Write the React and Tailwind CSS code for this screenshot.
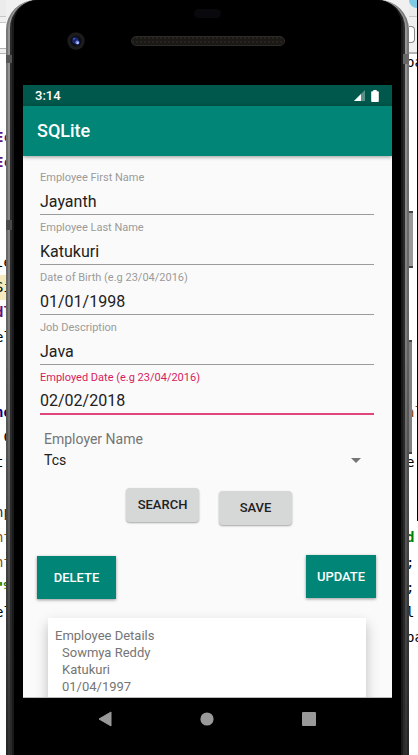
import React from "react";

const leftCode = [
  { text: " ,", top: "text-[#3a1a10]" },
  {}, {},
  { text: "Ec", top: "font-bold text-[#660e7a]" },
  { text: "Ec", top: "font-bold text-[#660e7a]" },
  {}, {}, {},
  { text: "le", top: "text-black" },
  { text: "Si", top: "bg-[#f5eabb] text-black" },
  { text: "dl", top: "font-bold text-[#660e7a]" },
  { text: "el", top: "text-black" },
  {}, {},
  { text: "ne", top: "font-bold text-[#000080]" },
  { text: " C", top: "text-black" },
  { text: "t", top: "text-black" },
  {},
  { text: "np", top: "text-[#1a2b4a]" },
  { text: "nt", top: "text-[#8a4a10]" },
  { text: "nt", top: "text-[#8a4a10]" },
  { text: "\"%", top: "font-bold text-[#008000]" },
  { text: "el", top: "text-black" },
  { text: " ,", top: "text-[#3a1a10]" },
];

const rightCode = [
  { text: "pa", top: "text-black" },
  {}, {}, {}, {}, {}, {}, {}, {}, {}, {}, {}, {}, {},
  { text: "al", top: "text-[#8a4a10]" },
  {},
  { text: "e", top: "text-black" },
  {}, {},
  { text: "d", top: "font-bold text-[#008000]" },
  { text: ";", top: "text-black" },
  { text: ";", top: "text-black" },
  { text: "l", top: "text-black" },
  { text: "pa", top: "text-black" },
];

const fields = [
  { id: "first", label: "Employee First Name", value: "Jayanth" },
  { id: "last", label: "Employee Last Name", value: "Katukuri" },
  { id: "dob", label: "Date of Birth (e.g 23/04/2016)", value: "01/01/1998" },
  { id: "job", label: "Job Description", value: "Java" },
  { id: "employed", label: "Employed Date (e.g 23/04/2016)", value: "02/02/2018", active: true },
];

function CodeLines({ lines, shift }) {
  return (
    <div className="font-['DejaVu_Sans_Mono',monospace] text-sm leading-[25px]">
      {lines.map((line, i) => (
        <div key={i} className={`h-[25px] whitespace-pre ${line.top || ""}`}>
          <span className={`block ${shift}`}>{line.text}</span>
        </div>
      ))}
    </div>
  );
}

function Field({ id, label, value, active }) {
  return (
    <div className="pt-[5px]">
      <label
        htmlFor={id}
        className={`block text-[11px] leading-4 ${active ? "text-[#d81b60]" : "text-[#9b9b9b]"}`}
      >
        {label}
      </label>
      <input
        id={id}
        type="text"
        defaultValue={value}
        className={`block h-[29px] w-full bg-transparent pt-[2px] text-base text-[#212121] outline-none ${
          active ? "border-b-2 border-[#e0457d]" : "border-b border-[#9b9b9b]"
        }`}
      />
    </div>
  );
}

function Bezel() {
  return (
    <div className="h-[85px] shrink-0">
      <div className="flex justify-center pt-[9px]">
        <div className="h-[9px] w-[27px] rounded-full bg-[#08080d]" />
      </div>
      <div className="mt-[14px] flex items-center gap-[46px] pl-11">
        <svg width="18" height="18" viewBox="0 0 18 18" aria-hidden="true">
          <circle cx="9" cy="9" r="8.7" fill="#1d1c1c" />
          <circle cx="9" cy="9" r="5.6" fill="#0b0d18" />
          <circle cx="8.4" cy="8.5" r="3.2" fill="#1b2766" />
          <circle cx="10.4" cy="10.6" r="2" fill="#6c83e0" />
          <circle cx="10.7" cy="11" r="0.9" fill="#c9d4ff" />
          <circle cx="7" cy="6.8" r="1" fill="#4055b8" />
        </svg>
        <svg width="154" height="10" viewBox="0 0 154 10" aria-hidden="true">
          <defs>
            <pattern id="mesh" width="4" height="4" patternUnits="userSpaceOnUse">
              <rect width="4" height="4" fill="#1b1916" />
              <rect x="1" y="1" width="2" height="2" fill="#26231f" />
            </pattern>
          </defs>
          <rect x="0.5" y="0.5" width="153" height="9" rx="4.5" fill="url(#mesh)" stroke="#2e2b28" />
        </svg>
      </div>
    </div>
  );
}

function StatusBar() {
  return (
    <div className="flex h-[21px] shrink-0 items-center justify-between bg-[#00574b] pl-3 pr-[13px] text-white">
      <span className="text-[13px] font-medium">3:14</span>
      <span className="flex items-center gap-[6px]">
        <svg width="11" height="11" viewBox="0 0 11 11" aria-hidden="true">
          <path d="M0 11 11 0v11z" fill="#fff" fillOpacity=".35" />
          <path d="M0 11 7 4v7z" fill="#fff" />
        </svg>
        <svg width="8" height="12" viewBox="0 0 8 12" aria-hidden="true">
          <path d="M2.3 0h3.4v1.2H7q.8 0 .8.8v9q0 .9-.8.9H1q-.8 0-.8-.9V2q0-.8.8-.8h1.3z" fill="#fff" />
        </svg>
      </span>
    </div>
  );
}

function NavBar() {
  return (
    <nav className="flex h-[57px] shrink-0 justify-center pr-[2px] text-[#999]">
      <button aria-label="Back" className="flex h-[42px] w-[102px] items-center justify-center">
        <svg width="14" height="16" viewBox="0 0 14 16" aria-hidden="true">
          <path d="M13 1v14L1 8z" fill="currentColor" stroke="currentColor" strokeLinejoin="round" />
        </svg>
      </button>
      <button aria-label="Home" className="flex h-[42px] w-[102px] items-center justify-center">
        <svg width="14" height="14" viewBox="0 0 14 14" aria-hidden="true">
          <circle cx="7" cy="7" r="6.6" fill="currentColor" />
        </svg>
      </button>
      <button aria-label="Recent apps" className="flex h-[42px] w-[102px] items-center justify-center">
        <svg width="14" height="14" viewBox="0 0 14 14" aria-hidden="true">
          <rect width="14" height="14" rx="1" fill="currentColor" />
        </svg>
      </button>
    </nav>
  );
}

const grey =
  "h-[34px] w-[73px] rounded-sm bg-[#d6d7d7] text-[13px] font-medium text-[#212121] shadow-[0_1px_2px_rgba(0,0,0,0.35)]";
const teal =
  "h-[43px] bg-[#008577] text-[13px] font-medium text-white shadow-[0_1px_3px_rgba(0,0,0,0.4)]";

export default function App() {
  return (
    <div className="flex h-screen overflow-hidden bg-gradient-to-b from-[#f0f0f0] from-[54px] to-white to-[54px] font-[Roboto,sans-serif]">
      <div className="w-[6px] shrink-0 overflow-hidden">
        <div className="h-[17px] border-b border-[#c8c8c8] bg-[#ececec]" />
        <div className="h-[6px] border-b border-[#c8c8c8] bg-[#f0f0f0]" />
        <div className="h-[25px] bg-white" />
        <div className="mb-px h-[6px] border-y border-[#b4b4b4] bg-[#f0f0f0]" />
        <div className="-mt-[5px]">
          <CodeLines lines={leftCode} shift="-ml-[5px]" />
        </div>
      </div>

      <div className="relative z-10 flex min-w-0 flex-1 rounded-t-[30px] bg-gradient-to-b from-[#999] via-[#7c7c7c] via-45% to-[#303030]">
        <div className="absolute left-full top-[211px] h-[57px] w-1 border-y-2 border-[#444] bg-[#999]" />
        <div className="absolute left-full top-[340px] h-[114px] w-[3px] border-y-2 border-[#444] bg-[#808080]" />
        <div className="absolute left-0 top-[55px] h-2 w-[6px] bg-[#555]" />
        <div className="absolute left-0 top-[220px] h-[10px] w-[6px] bg-[#4a4a4a]" />
        <div className="absolute right-0 top-[54px] h-[10px] w-[6px] bg-[#666]" />
        <div className="flex min-w-0 flex-1 rounded-t-[30px] border-x-2 border-black/20 px-[2px]">
          <div className="flex min-w-0 flex-1 rounded-t-[28px] border-x-2 border-[#2a2a2a] bg-black">
            <div className="flex min-w-0 flex-1 rounded-t-[26px] border-x-2 border-[#191919]">
              <div className="flex min-w-0 flex-1 flex-col rounded-t-[24px] bg-black pl-[9px] pr-[9px]">
                <Bezel />
                <main className="flex min-h-0 flex-1 flex-col overflow-hidden border-b border-[#bbb] bg-[#fafafa]">
                  <StatusBar />
                  <header className="flex h-[50px] shrink-0 items-center bg-[#008577] pl-[14px] shadow-[0_1px_4px_rgba(0,0,0,0.4)]">
                    <h1 className="text-lg font-medium text-white">SQLite</h1>
                  </header>

                  <form className="pt-[9px]" onSubmit={(e) => e.preventDefault()}>
                    <div className="pl-[17px] pr-[18px]">
                      {fields.map((f) => (
                        <Field key={f.id} {...f} />
                      ))}
                    </div>

                    <div className="mt-[14px] pl-[21px] pr-6">
                      <label htmlFor="employer" className="block text-sm leading-5 text-[#757575]">
                        Employer Name
                      </label>
                      <div className="flex items-center">
                        <select
                          id="employer"
                          className="h-[22px] min-w-0 flex-1 appearance-none bg-transparent text-sm text-[#212121] outline-none"
                        >
                          <option>Tcs</option>
                        </select>
                        <svg className="mr-[7px]" width="10" height="5" viewBox="0 0 10 5" aria-hidden="true">
                          <path d="M0 0h10L5 5z" fill="#757575" />
                        </svg>
                      </div>
                    </div>

                    <div className="mt-[17px] flex items-start justify-center gap-5 pl-[3px]">
                      <button type="button" className={grey}>SEARCH</button>
                      <button type="button" className={`mt-[3px] ${grey}`}>SAVE</button>
                    </div>

                    <div className="mt-[30px] flex items-start justify-between pl-[14px] pr-4">
                      <button type="button" className={`mt-px w-[79px] ${teal}`}>DELETE</button>
                      <button type="button" className={`w-[70px] ${teal}`}>UPDATE</button>
                    </div>
                  </form>

                  <section className="ml-[25px] mr-[26px] mt-[19px] shrink-0 bg-white pb-5 pl-[7px] pt-[9px] text-[13px] leading-[17px] text-[#757575] shadow-[0_6px_12px_rgba(0,0,0,0.25)]">
                    <h2>Employee Details</h2>
                    <div className="pl-[7px]">
                      <p>Sowmya Reddy</p>
                      <p>Katukuri</p>
                      <p>01/04/1997</p>
                    </div>
                  </section>
                </main>
                <NavBar />
              </div>
            </div>
          </div>
        </div>
      </div>

      <div className="relative w-[9px] shrink-0 overflow-hidden">
        <div className="h-[17px] overflow-hidden border-b border-[#c8c8c8] bg-[#ececec]">
          <div className="-mt-2 h-4 w-4 rounded-full bg-[#7fcbe6]" />
        </div>
        <div className="h-[37px] border-b-2 border-[#b4b4b4] bg-[#f0f0f0] pt-[9px]">
          <div className="h-[17px] w-[6px] rounded-r-sm border border-l-0 border-[#888] bg-white" />
        </div>
        <div className="-mt-[4px]">
          <CodeLines lines={rightCode} shift="-ml-[3px]" />
        </div>
        <div className="absolute right-0 top-0 h-[521px] w-px bg-black" />
      </div>
    </div>
  );
}
